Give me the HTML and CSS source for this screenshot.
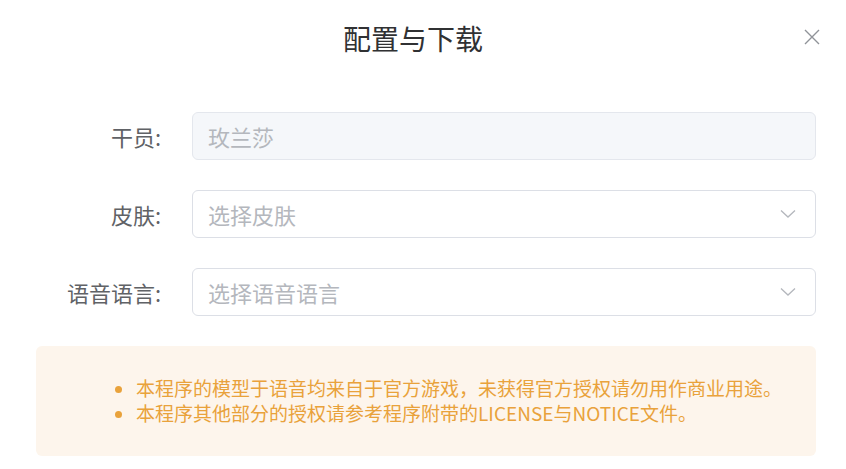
FILE: index.html
```html
<!DOCTYPE html>
<html lang="zh-CN">
<head>
    <meta charset="UTF-8">
    <meta name="viewport" content="width=device-width, initial-scale=1.0">
    <title>配置与下载</title>
    <link rel="stylesheet" href="styles.css">
</head>
<body>
    <div class="dialog">
        <div class="dialog-header">
            <span class="dialog-title">配置与下载</span>
            <button class="dialog-close" type="button" aria-label="关闭">
                <svg width="16" height="16" viewBox="0 0 16 16">
                    <path d="M1 1 L15 15 M15 1 L1 15" stroke="#909399" stroke-width="1.4" fill="none"/>
                </svg>
            </button>
        </div>
        <div class="dialog-body">
            <form class="form">
                <div class="form-item">
                    <label class="form-label">干员:</label>
                    <div class="input is-disabled">
                        <input type="text" value="玫兰莎" disabled>
                    </div>
                </div>
                <div class="form-item">
                    <label class="form-label">皮肤:</label>
                    <div class="input select">
                        <input type="text" placeholder="选择皮肤" readonly>
                        <svg class="arrow" width="16" height="10" viewBox="0 0 16 10">
                            <path d="M1 1.5 L8 8 L15 1.5" stroke="#b4b7bd" stroke-width="1.3" fill="none"/>
                        </svg>
                    </div>
                </div>
                <div class="form-item">
                    <label class="form-label">语音语言:</label>
                    <div class="input select">
                        <input type="text" placeholder="选择语音语言" readonly>
                        <svg class="arrow" width="16" height="10" viewBox="0 0 16 10">
                            <path d="M1 1.5 L8 8 L15 1.5" stroke="#b4b7bd" stroke-width="1.3" fill="none"/>
                        </svg>
                    </div>
                </div>
            </form>
            <!-- 提示信息 -->
            <div class="alert">
                <ul>
                    <li>本程序的模型于语音均来自于官方游戏，未获得官方授权请勿用作商业用途。</li>
                    <li>本程序其他部分的授权请参考程序附带的LICENSE与NOTICE文件。</li>
                </ul>
            </div>
        </div>
    </div>
</body>
</html>
```

FILE: styles.css
```css
body {
    margin: 0;
    padding: 0;
    background-color: #fff;
    font-family: "Noto Sans CJK SC", "Liberation Sans", sans-serif;
}
.dialog {
    width: 846px;
    height: 469px;
    overflow: hidden;
}
.dialog-header {
    position: relative;
    padding: 20px 50px 0 30px;
    height: 36px;
    text-align: center;
}
.dialog-title {
    font-size: 28px;
    line-height: 36px;
    color: #303133;
}
.dialog-close {
    position: absolute;
    top: 29px;
    right: 26px;
    padding: 0;
    border: none;
    background: none;
    cursor: pointer;
}
.dialog-close svg {
    display: block;
}
.dialog-body {
    padding: 56px 30px 0 36px;
}
.form-item {
    display: flex;
    align-items: center;
    margin-bottom: 30px;
}
.form-label {
    width: 156px;
    box-sizing: border-box;
    padding-right: 31px;
    text-align: right;
    font-size: 22px;
    color: #606266;
}
.input {
    flex: 1;
    display: flex;
    align-items: center;
    height: 48px;
    box-sizing: border-box;
    border: 1px solid #dcdfe6;
    border-radius: 6px;
    background-color: #fff;
}
.input input {
    flex: 1;
    min-width: 0;
    border: none;
    outline: none;
    background: transparent;
    padding: 0 15px;
    font-family: inherit;
    font-size: 22px;
    color: #606266;
}
.input input::placeholder {
    color: #b4b7bd;
}
.is-disabled {
    background-color: #f5f7fa;
    border-color: #e4e7ed;
}
.is-disabled input {
    color: #b4b7bd;
}
.arrow {
    margin-right: 19px;
}
.alert {
    margin-top: 25px;
    height: 110px;
    box-sizing: border-box;
    padding: 29px 0 0;
    background-color: #fdf5ec;
    border-radius: 6px;
    color: #e9a23b;
}
.alert ul {
    margin: 0;
    padding-left: 100px;
    font-size: 19px;
    line-height: 25px;
}
```
